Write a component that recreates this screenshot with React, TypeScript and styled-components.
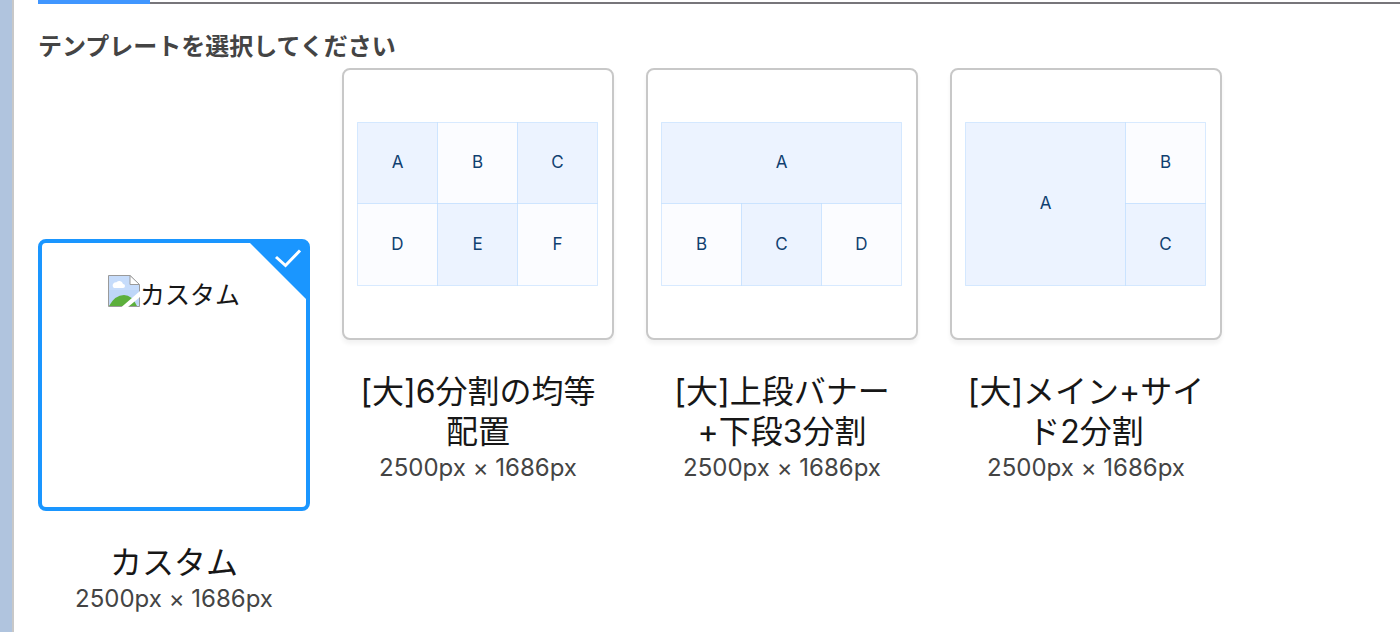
import React, { useState } from "react";
import styled, { createGlobalStyle } from "styled-components";

const GlobalStyle = createGlobalStyle`
  *, *::before, *::after { box-sizing: border-box; }
  body {
    margin: 0;
    background: #ffffff;
    color: #171717;
    font-family: Inter, "Noto Sans CJK JP", sans-serif;
    font-variant-ligatures: no-contextual;
  }
`;

const Page = styled.main`
  min-height: 100vh;
  border-left: 12px solid #b0c4de;
`;

const Panel = styled.div`
  min-height: 100vh;
  padding-left: 24px;
  border-left: 2px solid #c8c8c8;
`;

const TabStrip = styled.div`
  display: flex;
  align-items: flex-end;
  height: 4px;
`;

const ActiveTabLine = styled.div`
  width: 112px;
  height: 4px;
  background: #4096ff;
`;

const TabRule = styled.div`
  flex: 1;
  height: 2px;
  background: #77757a;
`;

const Picker = styled.fieldset`
  margin: 0;
  padding: 24px 0 0;
  border: 0;
  min-width: 0;
`;

const Heading = styled.legend`
  float: left;
  width: 100%;
  padding: 0;
  font-size: 24px;
  line-height: 38px;
  font-weight: 700;
  color: #444444;
`;

const TemplateList = styled.div`
  clear: both;
  display: flex;
  flex-wrap: wrap;
  align-items: flex-start;
  gap: 32px;
  padding-top: 2px;
`;

const Option = styled.label<{ $lowered: boolean }>`
  display: flex;
  flex-direction: column;
  width: 272px;
  margin-top: ${(p) => (p.$lowered ? "171px" : "0")};
  text-align: center;
  cursor: pointer;
`;

const Radio = styled.input`
  position: absolute;
  opacity: 0;
  width: 1px;
  height: 1px;
  margin: 0;
`;

const Card = styled.span<{ $selected: boolean; $top: boolean }>`
  position: relative;
  display: flex;
  justify-content: center;
  align-items: ${(p) => (p.$top ? "flex-start" : "center")};
  height: 272px;
  padding-top: ${(p) => (p.$top ? "32px" : "0")};
  border: ${(p) => (p.$selected ? "4px solid #1a96ff" : "2px solid #c8c8c8")};
  border-radius: 8px;
  background: #ffffff;
  box-shadow: ${(p) => (p.$selected ? "none" : "0 4px 4px rgba(0, 0, 0, 0.05)")};
`;

const Corner = styled.svg`
  position: absolute;
  top: 0;
  right: 0;
  width: 56px;
  height: 56px;
`;

const MissingImage = styled.span`
  display: flex;
  align-items: flex-start;
  font-size: 25px;
  line-height: 40px;
`;

const Title = styled.span`
  margin-top: 32px;
  padding: 0 16px;
  font-size: 32px;
  line-height: 40px;
`;

const Size = styled.span`
  font-size: 24px;
  line-height: 32px;
  color: #444444;
`;

const Diagram = styled.svg`
  width: 242px;
  height: 164px;

  text {
    font-family: Inter, sans-serif;
    font-size: 17px;
    fill: #0f4070;
    text-anchor: middle;
  }
`;

type Cell = { name: string; x: number; y: number; w: number; h: number; tinted: boolean };
type Template = { id: string; title: string; cells?: Cell[] };

const templates: Template[] = [
  { id: "custom", title: "カスタム" },
  {
    id: "grid",
    title: "[大]6分割の均等配置",
    cells: [
      { name: "A", x: 0, y: 0, w: 80, h: 81, tinted: true },
      { name: "B", x: 80, y: 0, w: 80, h: 81, tinted: false },
      { name: "C", x: 160, y: 0, w: 80, h: 81, tinted: true },
      { name: "D", x: 0, y: 81, w: 80, h: 82, tinted: false },
      { name: "E", x: 80, y: 81, w: 80, h: 82, tinted: true },
      { name: "F", x: 160, y: 81, w: 80, h: 82, tinted: false },
    ],
  },
  {
    id: "banner",
    title: "[大]上段バナー+下段3分割",
    cells: [
      { name: "A", x: 0, y: 0, w: 240, h: 81, tinted: true },
      { name: "B", x: 0, y: 81, w: 80, h: 82, tinted: false },
      { name: "C", x: 80, y: 81, w: 80, h: 82, tinted: true },
      { name: "D", x: 160, y: 81, w: 80, h: 82, tinted: false },
    ],
  },
  {
    id: "main-side",
    title: "[大]メイン+サイド2分割",
    cells: [
      { name: "A", x: 0, y: 0, w: 160, h: 163, tinted: true },
      { name: "B", x: 160, y: 0, w: 80, h: 81, tinted: false },
      { name: "C", x: 160, y: 81, w: 80, h: 82, tinted: true },
    ],
  },
];

function LayoutDiagram({ cells }: { cells: Cell[] }) {
  return (
    <Diagram viewBox="-0.5 -0.5 242 164" aria-hidden="true">
      {cells.map((c) => (
        <g key={c.name}>
          <rect
            x={c.x}
            y={c.y}
            width={c.w}
            height={c.h}
            fill={c.tinted ? "#ecf3ff" : "#fbfcff"}
            stroke="#b4d7ff"
            strokeOpacity="0.5"
          />
          <text x={c.x + c.w / 2} y={Math.floor(c.y + c.h / 2) + 5.5}>
            {c.name}
          </text>
        </g>
      ))}
    </Diagram>
  );
}

function BrokenImageIcon() {
  return (
    <svg width="32" height="32" viewBox="0 0 32 32" aria-hidden="true">
      <path d="M.5.5H22L31.5 10V31.5H.5Z" fill="#c6dcfb" />
      <path d="M1 15H31V29H1Z" fill="#b9d2f6" opacity=".6" />
      <path d="M6 13a3 3 0 0 1 0-5q1-1 2-.5a4 4 0 0 1 7 1.500q2 0 2 2t-2 2Z" fill="#fff" />
      <path d="M1 31Q7 20 16 20q8 0 13 11Z" fill="#5caf3c" />
      <path d="M.5 31.500V.5H22L31.500 10V31.500Z" fill="none" stroke="#9a9a9a" />
      <path d="M22 .5V9.500H31.500Z" fill="#fff" stroke="#9a9a9a" />
      <path d="M32 16V22L20 32H13.500Z" fill="#fff" />
    </svg>
  );
}

export default function App() {
  const [selected, setSelected] = useState("custom");

  return (
    <>
      <GlobalStyle />
      <Page>
        <Panel>
          <TabStrip>
            <ActiveTabLine />
            <TabRule />
          </TabStrip>
          <Picker>
            <Heading>テンプレートを選択してください</Heading>
            <TemplateList>
              {templates.map((t) => (
                <Option key={t.id} $lowered={!t.cells}>
                  <Radio
                    type="radio"
                    name="template"
                    value={t.id}
                    checked={selected === t.id}
                    onChange={() => setSelected(t.id)}
                  />
                  <Card $selected={selected === t.id} $top={!t.cells}>
                    {t.cells ? (
                      <LayoutDiagram cells={t.cells} />
                    ) : (
                      <MissingImage>
                        <BrokenImageIcon />
                        {t.title}
                      </MissingImage>
                    )}
                    {selected === t.id && (
                      <Corner viewBox="0 0 56 56" aria-hidden="true">
                        <path d="M0 0H56V56Z" fill="#1a96ff" />
                        <path d="M26 14L35.500 22.500L50 7.500" fill="none" stroke="#ffffff" strokeWidth="3" />
                      </Corner>
                    )}
                  </Card>
                  <Title>{t.title}</Title>
                  <Size>2500px × 1686px</Size>
                </Option>
              ))}
            </TemplateList>
          </Picker>
        </Panel>
      </Page>
    </>
  );
}
